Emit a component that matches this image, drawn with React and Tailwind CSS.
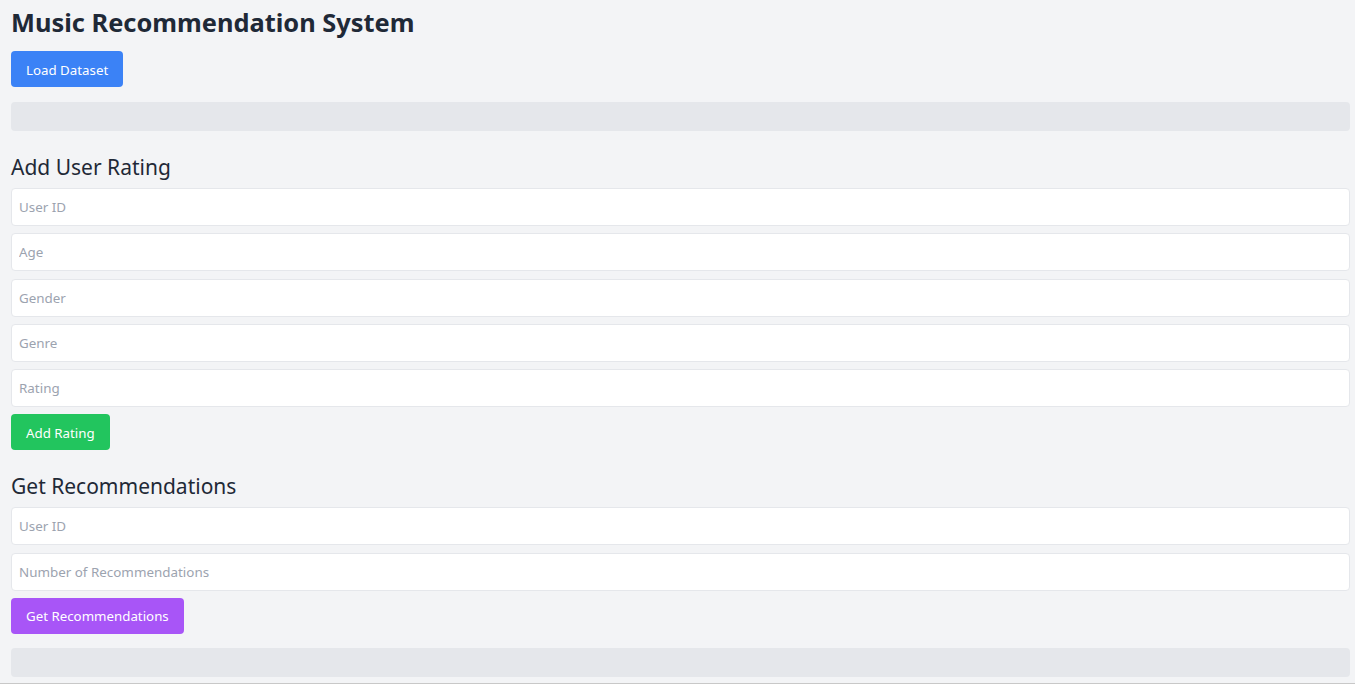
import React from 'react';

const Field = ({ placeholder }) => (
  <input
    type="text"
    placeholder={placeholder}
    className="block w-full h-[38px] mb-[7.25px] px-[7px] bg-white border border-[#e5e7eb] rounded text-[13.4px] text-[#1f2937] placeholder:text-[#9ca3af] outline-none"
  />
);

const App = () => {
  const ratingFields = ["User ID", "Age", "Gender", "Genre", "Rating"];

  return (
    <div className="min-h-[684px] bg-[#f3f4f6] pl-[11px] pr-[5px] pt-[4px] border-b border-[#c8c8c8]" style={{ fontFamily: '"Noto Sans", "Open Sans", sans-serif' }}>
      <h1 className="text-[25.4px] leading-[36px] font-bold text-[#1f2937] mb-[11px]">Music Recommendation System</h1>
      <button className="h-9 pt-[3px] px-[15px] bg-[#3b82f6] text-white text-[13.3px] rounded">Load Dataset</button>
      <div className="mt-[15px] h-[29px] bg-[#e5e7eb] rounded"></div>

      <h2 className="mt-[20px] mb-[5px] text-[21px] leading-8 text-[#1f2937]">Add User Rating</h2>
      {ratingFields.map((f) => (
        <Field key={f} placeholder={f} />
      ))}
      <button className="h-9 pt-[3px] px-[15px] bg-[#22c55e] text-white text-[13.3px] rounded">Add Rating</button>

      <h2 className="mt-[20px] mb-[5px] text-[21px] leading-8 text-[#1f2937]">Get Recommendations</h2>
      <Field placeholder="User ID" />
      <Field placeholder="Number of Recommendations" />
      <button className="h-9 pt-[3px] px-[15px] bg-[#a855f7] text-white text-[13.3px] rounded">Get Recommendations</button>
      <div className="mt-[14px] h-[29px] bg-[#e5e7eb] rounded"></div>
    </div>
  );
};

export default App;
